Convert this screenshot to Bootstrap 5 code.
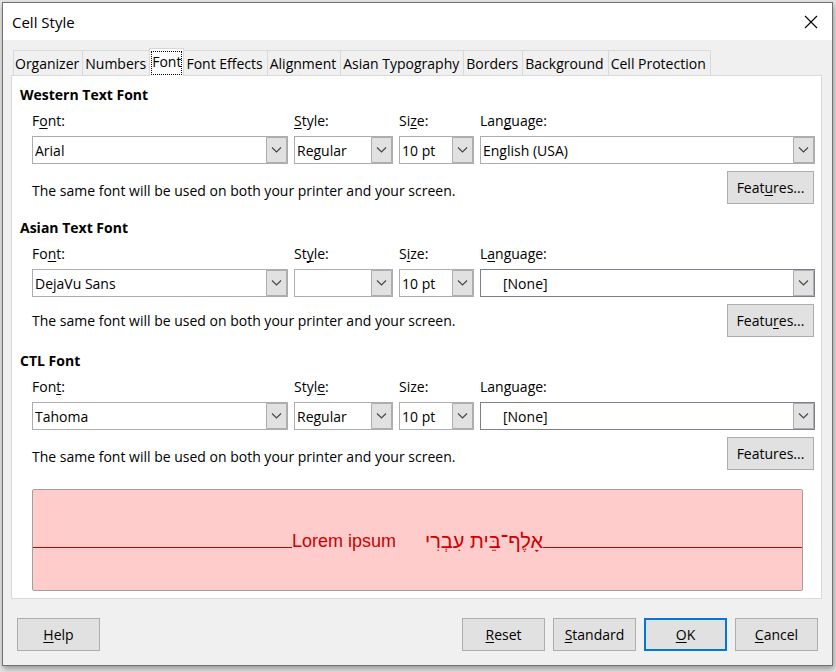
<!DOCTYPE html>
<html lang="en">
<head>
<meta charset="utf-8">
<meta name="viewport" content="width=device-width, initial-scale=1">
<title>Cell Style</title>
<link rel="stylesheet" href="https://cdn.jsdelivr.net/npm/bootstrap@5.3.0/dist/css/bootstrap.min.css">
<style>
body { font-family: "Open Sans", "Noto Sans", sans-serif; font-size: 14px; line-height: 20px; color: #000; background: #e6e6e6; padding: 2px 3px 6px 2px; min-height: 100vh; }
.dialog-window { background: #f0f0f0; border: 1px solid #707070; box-shadow: 1px 3px 6px rgba(0,0,0,.35); }
.title-bar { background: #fff; height: 37px; padding: 0 14px 0 9px; }
.title-bar h1 { font-size: 15px; line-height: 20px; }
.close-button { border: 0; background: none; padding: 0; line-height: 0; }
.dialog-body { padding: 10px 10px 0 8px; }
.tab-strip { padding-left: 2px; }
.tab-strip button { border: 1px solid #d9d9d9; border-width: 1px 1px 0 0; background: #f0f0f0; color: #000; padding: 2px 4px 1px 2px; height: 25px; line-height: 20px; white-space: nowrap; }
.tab-strip button:first-child { border-left-width: 1px; padding: 2px 3px 1px 1px; }
.tab-strip button.active { background: #fff; height: 28px; margin-top: -2px; margin-bottom: -1px; margin-left: -2px; padding: 2px; border-left-width: 1px; z-index: 1; }
.tab-strip .active span { display: block; outline: 1px dotted #000; height: 22px; }
.tab-panel { background: #fff; border: 1px solid #d9d9d9; padding: 8px 6px 7px 8px; }
.font-group { padding-bottom: 13px; }
.font-group h2 { font-size: 14px; line-height: 22px; font-weight: 700; margin: 0; }
.field-grid { display: grid; grid-template-columns: 256fr 99fr 75fr 335fr; gap: 0 6px; padding-left: 12px; }
.field-grid label { display: block; line-height: 20px; margin: 5px 0; }
.combo { display: block; width: 100%; height: 28px; appearance: none; border: 1px solid #abadb3; border-radius: 0; padding: 2px 24px 0 2px; color: #000; line-height: 20px;
  background: #fff url("data:image/svg+xml,%3Csvg xmlns='http://www.w3.org/2000/svg' width='21' height='26'%3E%3Cpath d='M.5 .5h20v25H.5z' fill='%23e1e1e1' stroke='%23adadad'/%3E%3Cpath d='M6 10.5l4.5 4.5 4.5-4.5' fill='none' stroke='%23444' stroke-width='1.1'/%3E%3C/svg%3E") no-repeat right 0 top 0; }
.combo-indented { padding-left: 22px; border-color: #7a7f8a; }
.note-row { padding: 7px 1px 0 12px; }
.note-low { padding-top: 6px; }
.push { height: 33px; background: #e1e1e1; border: 1px solid #adadad; color: #000; padding: 0; text-align: center; }
.push-feature { width: 87px; }
.push-action { width: 83px; }
.push-default { border: 2px solid #0078d7; }
.preview { margin: 6px 12px 0 12px; height: 102px; background: #fcc; border: 1px solid #a0a0a0; border-radius: 2px; color: #c00; font-family: "Liberation Sans", Arial, sans-serif; font-size: 18px; line-height: 20px; padding-top: 41px; }
.rule-line { flex: 1 1 0; height: 1px; background: #c00; margin-top: 16px; }
.sample-hebrew { margin-left: 29px; font-size: 20px; }
.action-row { padding: 19px 6px 14px 6px; }
u { text-decoration-thickness: 1px; text-underline-offset: 2px; text-decoration-skip-ink: none; }
</style>
<script src="https://cdn.jsdelivr.net/npm/bootstrap@5.3.0/dist/js/bootstrap.bundle.min.js"></script>
</head>
<body>
<main class="dialog-window">
  <header class="title-bar d-flex align-items-center justify-content-between">
    <h1 class="m-0 fw-normal">Cell Style</h1>
    <button class="close-button" type="button" aria-label="Close"><svg width="14" height="14" viewBox="0 0 14 14"><path d="M1 1l12 12M13 1L1 13" stroke="#000" stroke-width="1.1" fill="none"/></svg></button>
  </header>
  <div class="dialog-body">
    <div class="tab-strip d-flex" role="tablist">
      <button type="button" role="tab">Organizer</button>
      <button type="button" role="tab">Numbers</button>
      <button type="button" role="tab" class="active position-relative" aria-selected="true"><span>Font</span></button>
      <button type="button" role="tab">Font Effects</button>
      <button type="button" role="tab">Alignment</button>
      <button type="button" role="tab">Asian Typography</button>
      <button type="button" role="tab">Borders</button>
      <button type="button" role="tab">Background</button>
      <button type="button" role="tab">Cell Protection</button>
    </div>
    <div class="tab-panel" role="tabpanel">
      <section class="font-group">
        <h2>Western Text Font</h2>
        <div class="field-grid">
          <div><label for="wf">F<u>o</u>nt:</label><select class="combo" id="wf"><option>Arial</option></select></div>
          <div><label for="ws"><u>S</u>tyle:</label><select class="combo" id="ws"><option>Regular</option></select></div>
          <div><label for="wz">Si<u>z</u>e:</label><select class="combo" id="wz"><option>10 pt</option></select></div>
          <div><label for="wl">Lan<u>g</u>uage:</label><select class="combo" id="wl"><option>English (USA)</option></select></div>
        </div>
        <div class="note-row d-flex justify-content-between align-items-center">
          <span class="note-low">The same font will be used on both your printer and your screen.</span>
          <button type="button" class="push push-feature">Feat<u>u</u>res...</button>
        </div>
      </section>
      <section class="font-group">
        <h2>Asian Text Font</h2>
        <div class="field-grid">
          <div><label for="af">Fo<u>n</u>t:</label><select class="combo" id="af"><option>DejaVu Sans</option></select></div>
          <div><label for="as">St<u>y</u>le:</label><select class="combo" id="as"><option></option></select></div>
          <div><label for="az">S<u>i</u>ze:</label><select class="combo" id="az"><option>10 pt</option></select></div>
          <div><label for="al">L<u>a</u>nguage:</label><select class="combo combo-indented" id="al"><option>[None]</option></select></div>
        </div>
        <div class="note-row d-flex justify-content-between align-items-center">
          <span>The same font will be used on both your printer and your screen.</span>
          <button type="button" class="push push-feature">Featu<u>r</u>es...</button>
        </div>
      </section>
      <section class="font-group">
        <h2>CTL Font</h2>
        <div class="field-grid">
          <div><label for="cf">Fon<u>t</u>:</label><select class="combo" id="cf"><option>Tahoma</option></select></div>
          <div><label for="cs">Styl<u>e</u>:</label><select class="combo" id="cs"><option>Regular</option></select></div>
          <div><label for="cz">Size:</label><select class="combo" id="cz"><option>10 pt</option></select></div>
          <div><label for="cl">Language:</label><select class="combo combo-indented" id="cl"><option>[None]</option></select></div>
        </div>
        <div class="note-row d-flex justify-content-between align-items-center">
          <span class="note-low">The same font will be used on both your printer and your screen.</span>
          <button type="button" class="push push-feature">Features...</button>
        </div>
      </section>
      <div class="preview d-flex align-items-start">
        <span class="rule-line"></span>
        <span>Lorem ipsum</span>
        <span class="sample-hebrew" lang="he" dir="rtl">אָלֶף־בֵּית עִבְרִי</span>
        <span class="rule-line"></span>
      </div>
    </div>
  </div>
  <footer class="action-row d-flex gap-2 mx-2">
    <button type="button" class="push push-action me-auto"><u>H</u>elp</button>
    <button type="button" class="push push-action"><u>R</u>eset</button>
    <button type="button" class="push push-action"><u>S</u>tandard</button>
    <button type="button" class="push push-action push-default"><u>O</u>K</button>
    <button type="button" class="push push-action"><u>C</u>ancel</button>
  </footer>
</main>
</body>
</html>
